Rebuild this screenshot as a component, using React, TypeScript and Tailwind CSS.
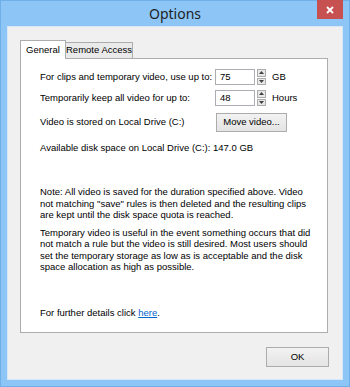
function Spin({ value, unit }: { value: string; unit: string }) {
  return (
    <div className="flex items-center">
      <div className="flex h-[16px] w-[40px] items-center border border-[#abadb3] bg-white pl-[4px]">{value}</div>
      <div className="ml-[2px] flex h-[16px] w-[9px] flex-col gap-px">
        <div className="flex flex-1 items-center justify-center border border-[#acacac] bg-[#e8e8e8]">
          <svg width="5" height="3" viewBox="0 0 5 3"><path d="M0 3L2.5 0L5 3Z" fill="#404040" /></svg>
        </div>
        <div className="flex flex-1 items-center justify-center border border-[#acacac] bg-[#e8e8e8]">
          <svg width="5" height="3" viewBox="0 0 5 3"><path d="M0 0L2.5 3L5 0Z" fill="#404040" /></svg>
        </div>
      </div>
      <span className="ml-[6px]">{unit}</span>
    </div>
  )
}

export default function App() {
  return (
    <div className="flex h-[387px] w-[350px] flex-col border border-[#6fb0e8] bg-[#8dc6f6] font-['Liberation_Sans',sans-serif] text-[9.5px] text-black">
      <div className="relative flex h-[25px] shrink-0 items-center justify-center">
        <span className="font-['Noto_Sans',sans-serif] text-[14px] text-[#1e1e1e]">Options</span>
        <div className="absolute right-[6px] top-[-1px] flex h-[19px] w-[26px] items-center justify-center bg-[#c75050]">
          <svg width="8" height="8" viewBox="0 0 8 8"><path d="M1 1L7 7M7 1L1 7" stroke="white" strokeWidth="1.8" /></svg>
        </div>
      </div>
      <div className="mx-[6px] mb-[6px] flex flex-1 flex-col border border-[#d6e7f7] bg-[#f0f0f0]">
        <div className="ml-[12px] mt-[13px] flex items-end whitespace-nowrap">
          <div className="relative z-10 -mb-px flex h-[19px] w-[46px] items-center justify-center border border-b-0 border-[#adadad] bg-white">General</div>
          <div className="flex h-[16px] w-[67px] items-center justify-center border border-b-0 border-l-0 border-[#adadad] bg-[#eaeaea]">Remote Access</div>
        </div>
        <div className="ml-[12px] mr-[14px] flex h-[275px] flex-col whitespace-nowrap border border-[#adadad] bg-white pl-[19px] pt-[10px]">
          <div className="flex items-center">
            <span className="w-[175px]">For clips and temporary video, use up to:</span>
            <Spin value="75" unit="GB" />
          </div>
          <div className="mt-[5px] flex items-center">
            <span className="w-[175px]">Temporarily keep all video for up to:</span>
            <Spin value="48" unit="Hours" />
          </div>
          <div className="mt-[7px] flex items-center">
            <span className="w-[176px]">Video is stored on Local Drive (C:)</span>
            <div className="flex h-[19px] w-[71px] items-center justify-center border border-[#acacac] bg-gradient-to-b from-[#f2f2f2] to-[#e4e4e4]">Move video...</div>
          </div>
          <p className="mt-[10px] leading-[12px]">Available disk space on Local Drive (C:): 147.0 GB</p>
          <p className="mt-[32px] leading-[11.5px]">
            Note: All video is saved for the duration specified above. Video<br />
            not matching "save" rules is then deleted and the resulting clips<br />
            are kept until the disk space quota is reached.
          </p>
          <p className="mt-[6px] leading-[11.5px]">
            Temporary video is useful in the event something occurs that did<br />
            not match a rule but the video is still desired. Most users should<br />
            set the temporary storage as low as is acceptable and the disk<br />
            space allocation as high as possible.
          </p>
          <p className="mt-[34px] leading-[12px]">
            For further details click <span className="text-[#0066cc] underline">here</span>.
          </p>
        </div>
        <div className="mr-[13px] mt-[14px] flex justify-end">
          <div className="flex h-[20px] w-[63px] items-center justify-center border border-[#acacac] bg-gradient-to-b from-[#f2f2f2] to-[#e4e4e4]">OK</div>
        </div>
      </div>
    </div>
  )
}
